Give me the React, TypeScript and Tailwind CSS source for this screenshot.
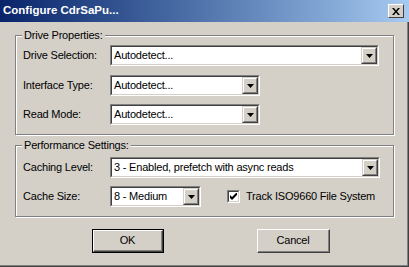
import React from "react";

function Arrow() {
  return (
    <svg width="7" height="4" viewBox="0 0 7 4" className="block">
      <path d="M0 0H7L3.5 4Z" fill="#000" />
    </svg>
  );
}

function Combo({ className, text }: { className: string; text: string }) {
  return (
    <div className={`h-[21px] border border-t-[#808080] border-l-[#808080] border-r-white border-b-white ${className}`}>
      <div className="flex h-full border border-t-[#404040] border-l-[#404040] border-r-[#d4d0c8] border-b-[#d4d0c8] bg-white">
        <div className="flex-1 pl-[2px] leading-[17px] whitespace-nowrap overflow-hidden">{text}</div>
        <div className="w-[16px] h-full border border-t-[#d4d0c8] border-l-[#d4d0c8] border-r-[#404040] border-b-[#404040] bg-[#d4d0c8]">
          <div className="flex h-full items-center justify-center border border-t-white border-l-white border-r-[#808080] border-b-[#808080]">
            <Arrow />
          </div>
        </div>
      </div>
    </div>
  );
}

function Row({ label, children, className = "" }: { label: string; children: React.ReactNode; className?: string }) {
  return (
    <div className={`flex items-center ${className}`}>
      <div className="w-[87px] shrink-0">{label}</div>
      {children}
    </div>
  );
}

function Group({ title, className, children }: { title: string; className: string; children: React.ReactNode }) {
  return (
    <div className={`relative ml-[15px] w-[379px] border border-[#808080] shadow-[inset_1px_1px_0_#fff,1px_1px_0_#fff] pl-[7px] ${className}`}>
      <div className="absolute left-[6px] top-[-8px] bg-[#d4d0c8] px-[2px] leading-[14px]">{title}</div>
      {children}
    </div>
  );
}

export default function App() {
  return (
    <div
      className="w-[409px] h-[267px] bg-[#d4d0c8] text-[11px] tracking-[-0.2px] text-black flex flex-col overflow-hidden shadow-[inset_-1px_-1px_0_#404040,inset_-2px_-2px_0_#808080]"
      style={{ fontFamily: '"Liberation Sans", Arial, sans-serif' }}
    >
      <div className="h-[22px] shrink-0 flex items-center bg-gradient-to-r from-[#0a246a] to-[#a6caf0] pl-[3px] pr-[5px]">
        <div className="flex-1 text-white font-bold text-[11.5px] tracking-normal whitespace-nowrap">Configure CdrSaPu...</div>
        <div className="w-[16px] h-[14px] bg-[#d4d0c8] border border-t-white border-l-white border-r-[#404040] border-b-[#404040] flex items-center justify-center">
          <svg width="8" height="7" viewBox="0 0 8 7">
            <path d="M0 0h2l2 2.5L6 0h2L5 3.5 8 7H6L4 4.5 2 7H0l3-3.5Z" fill="#000" />
          </svg>
        </div>
      </div>
      <Group title="Drive Properties:" className="mt-[13px] h-[100px] pt-[9px]">
        <Row label="Drive Selection:">
          <Combo className="w-[269px]" text="Autodetect..." />
        </Row>
        <Row label="Interface Type:" className="mt-[9px]">
          <Combo className="w-[150px]" text="Autodetect..." />
        </Row>
        <Row label="Read Mode:" className="mt-[8px]">
          <Combo className="w-[150px]" text="Autodetect..." />
        </Row>
      </Group>
      <Group title="Performance Settings:" className="mt-[10px] h-[72px] pt-[11px]">
        <Row label="Caching Level:">
          <Combo className="w-[270px]" text="3 - Enabled, prefetch with async reads" />
        </Row>
        <Row label="Cache Size:" className="mt-[8px]">
          <Combo className="w-[91px]" text="8 - Medium" />
          <div className="ml-[26px] flex items-center">
            <div className="w-[13px] h-[13px] border border-t-[#808080] border-l-[#808080] border-r-white border-b-white">
              <div className="w-full h-full bg-white border border-t-[#404040] border-l-[#404040] border-r-[#d4d0c8] border-b-[#d4d0c8] flex items-center justify-center">
                <svg width="7" height="7" viewBox="0 0 7 7">
                  <path d="M0 2v3l2 2 5-5V-1L2 4Z" fill="#000" />
                </svg>
              </div>
            </div>
            <div className="ml-[6px] whitespace-nowrap">Track ISO9660 File System</div>
          </div>
        </Row>
      </Group>
      <div className="flex mt-[12px]">
        <div className="ml-[92px] w-[72px] h-[24px] border border-black">
          <div className="w-full h-full border border-t-white border-l-white border-r-[#404040] border-b-[#404040]">
            <div className="w-full h-full border-r border-b border-[#808080] flex items-center justify-center">OK</div>
          </div>
        </div>
        <div className="ml-[93px] w-[73px] h-[24px] border border-t-white border-l-white border-r-[#404040] border-b-[#404040]">
          <div className="w-full h-full border-r border-b border-[#808080] flex items-center justify-center">Cancel</div>
        </div>
      </div>
    </div>
  );
}
